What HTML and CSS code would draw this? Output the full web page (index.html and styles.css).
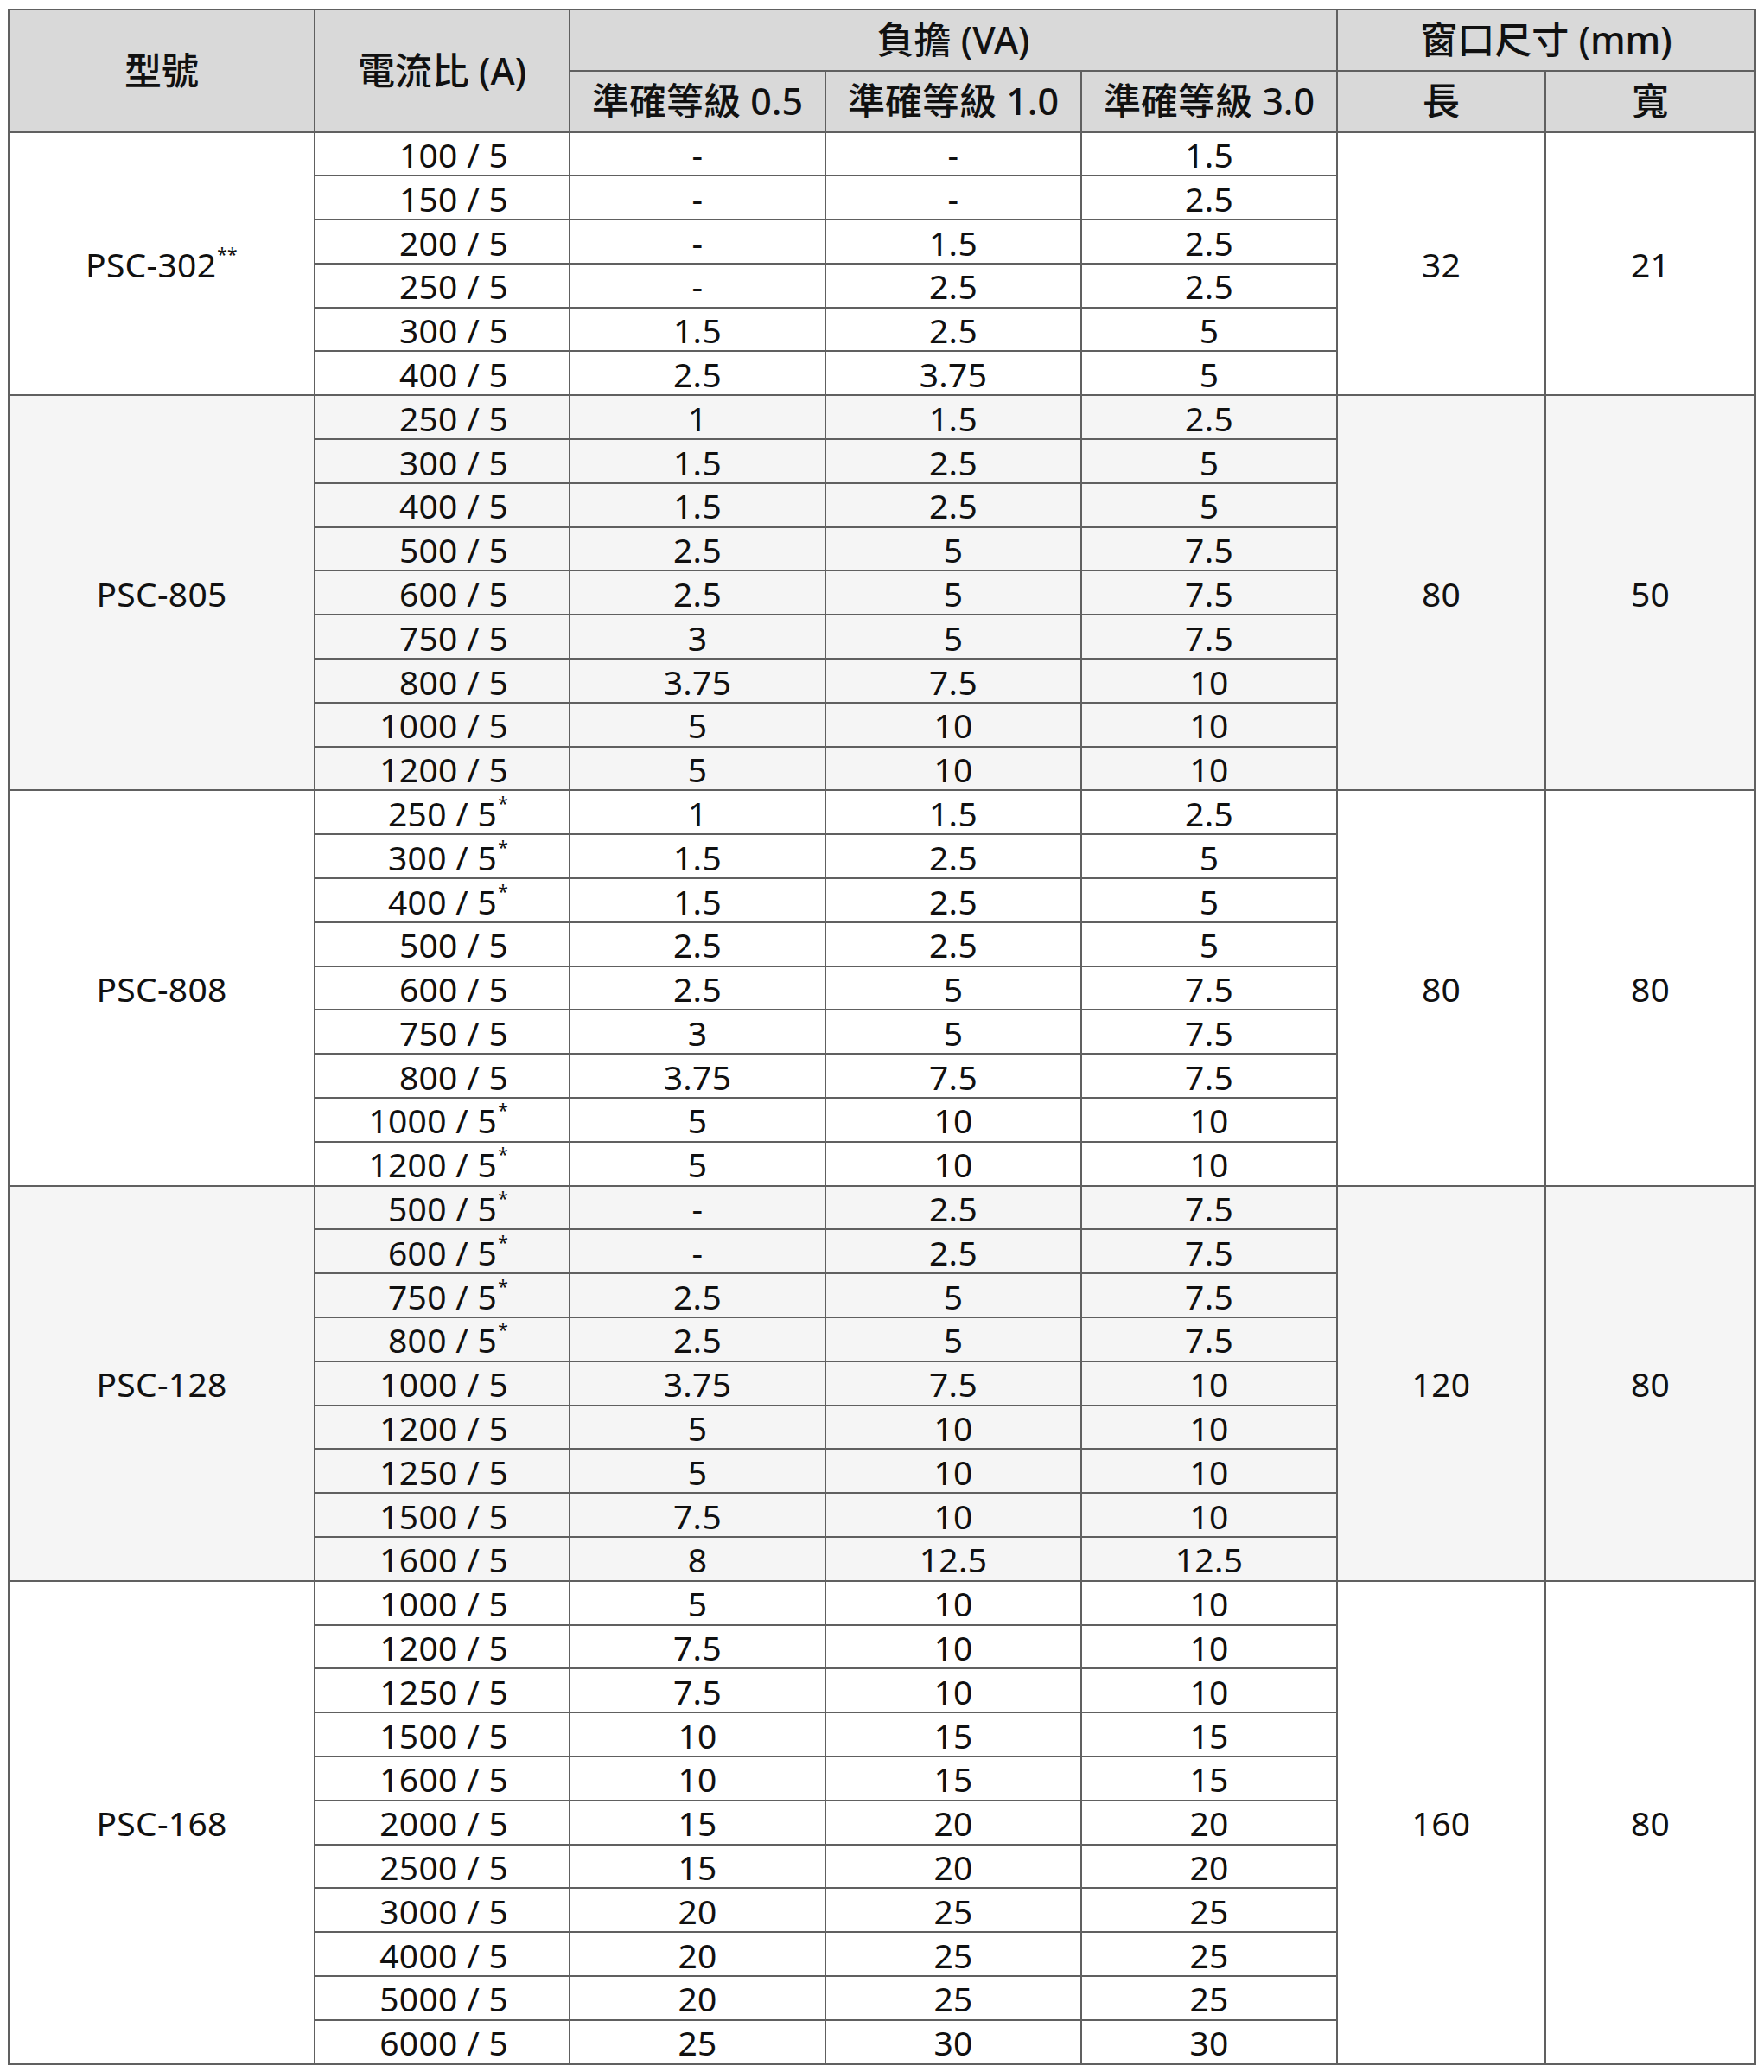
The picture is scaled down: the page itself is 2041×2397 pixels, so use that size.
FILE: index.html
```html
<!DOCTYPE html>
<html lang="zh-Hant">
<head>
<meta charset="utf-8">
<title>PSC 規格表</title>
<link rel="stylesheet" href="styles.css">
</head>
<body>
<table class="spec">
  <colgroup>
    <col class="c-model"><col class="c-ratio"><col class="c-va"><col class="c-va"><col class="c-va"><col class="c-len"><col class="c-wid">
  </colgroup>
  <thead>
    <tr class="h1">
      <th rowspan="2">型號</th>
      <th rowspan="2">電流比 (A)</th>
      <th colspan="3">負擔 (VA)</th>
      <th colspan="2">窗口尺寸 (mm)</th>
    </tr>
    <tr class="h2">
      <th>準確等級 0.5</th>
      <th>準確等級 1.0</th>
      <th>準確等級 3.0</th>
      <th>長</th>
      <th>寬</th>
    </tr>
  </thead>
  <tbody class="g-white">
    <tr><td rowspan="6">PSC-302<sup>**</sup></td><td>100 / 5</td><td>-</td><td>-</td><td>1.5</td><td rowspan="6">32</td><td rowspan="6">21</td></tr>
    <tr><td>150 / 5</td><td>-</td><td>-</td><td>2.5</td></tr>
    <tr><td>200 / 5</td><td>-</td><td>1.5</td><td>2.5</td></tr>
    <tr><td>250 / 5</td><td>-</td><td>2.5</td><td>2.5</td></tr>
    <tr><td>300 / 5</td><td>1.5</td><td>2.5</td><td>5</td></tr>
    <tr><td>400 / 5</td><td>2.5</td><td>3.75</td><td>5</td></tr>
  </tbody>
  <tbody class="g-gray">
    <tr><td rowspan="9">PSC-805</td><td>250 / 5</td><td>1</td><td>1.5</td><td>2.5</td><td rowspan="9">80</td><td rowspan="9">50</td></tr>
    <tr><td>300 / 5</td><td>1.5</td><td>2.5</td><td>5</td></tr>
    <tr><td>400 / 5</td><td>1.5</td><td>2.5</td><td>5</td></tr>
    <tr><td>500 / 5</td><td>2.5</td><td>5</td><td>7.5</td></tr>
    <tr><td>600 / 5</td><td>2.5</td><td>5</td><td>7.5</td></tr>
    <tr><td>750 / 5</td><td>3</td><td>5</td><td>7.5</td></tr>
    <tr><td>800 / 5</td><td>3.75</td><td>7.5</td><td>10</td></tr>
    <tr><td>1000 / 5</td><td>5</td><td>10</td><td>10</td></tr>
    <tr><td>1200 / 5</td><td>5</td><td>10</td><td>10</td></tr>
  </tbody>
  <tbody class="g-white">
    <tr><td rowspan="9">PSC-808</td><td>250 / 5<sup>*</sup></td><td>1</td><td>1.5</td><td>2.5</td><td rowspan="9">80</td><td rowspan="9">80</td></tr>
    <tr><td>300 / 5<sup>*</sup></td><td>1.5</td><td>2.5</td><td>5</td></tr>
    <tr><td>400 / 5<sup>*</sup></td><td>1.5</td><td>2.5</td><td>5</td></tr>
    <tr><td>500 / 5</td><td>2.5</td><td>2.5</td><td>5</td></tr>
    <tr><td>600 / 5</td><td>2.5</td><td>5</td><td>7.5</td></tr>
    <tr><td>750 / 5</td><td>3</td><td>5</td><td>7.5</td></tr>
    <tr><td>800 / 5</td><td>3.75</td><td>7.5</td><td>7.5</td></tr>
    <tr><td>1000 / 5<sup>*</sup></td><td>5</td><td>10</td><td>10</td></tr>
    <tr><td>1200 / 5<sup>*</sup></td><td>5</td><td>10</td><td>10</td></tr>
  </tbody>
  <tbody class="g-gray">
    <tr><td rowspan="9">PSC-128</td><td>500 / 5<sup>*</sup></td><td>-</td><td>2.5</td><td>7.5</td><td rowspan="9">120</td><td rowspan="9">80</td></tr>
    <tr><td>600 / 5<sup>*</sup></td><td>-</td><td>2.5</td><td>7.5</td></tr>
    <tr><td>750 / 5<sup>*</sup></td><td>2.5</td><td>5</td><td>7.5</td></tr>
    <tr><td>800 / 5<sup>*</sup></td><td>2.5</td><td>5</td><td>7.5</td></tr>
    <tr><td>1000 / 5</td><td>3.75</td><td>7.5</td><td>10</td></tr>
    <tr><td>1200 / 5</td><td>5</td><td>10</td><td>10</td></tr>
    <tr><td>1250 / 5</td><td>5</td><td>10</td><td>10</td></tr>
    <tr><td>1500 / 5</td><td>7.5</td><td>10</td><td>10</td></tr>
    <tr><td>1600 / 5</td><td>8</td><td>12.5</td><td>12.5</td></tr>
  </tbody>
  <tbody class="g-white">
    <tr><td rowspan="11">PSC-168</td><td>1000 / 5</td><td>5</td><td>10</td><td>10</td><td rowspan="11">160</td><td rowspan="11">80</td></tr>
    <tr><td>1200 / 5</td><td>7.5</td><td>10</td><td>10</td></tr>
    <tr><td>1250 / 5</td><td>7.5</td><td>10</td><td>10</td></tr>
    <tr><td>1500 / 5</td><td>10</td><td>15</td><td>15</td></tr>
    <tr><td>1600 / 5</td><td>10</td><td>15</td><td>15</td></tr>
    <tr><td>2000 / 5</td><td>15</td><td>20</td><td>20</td></tr>
    <tr><td>2500 / 5</td><td>15</td><td>20</td><td>20</td></tr>
    <tr><td>3000 / 5</td><td>20</td><td>25</td><td>25</td></tr>
    <tr><td>4000 / 5</td><td>20</td><td>25</td><td>25</td></tr>
    <tr><td>5000 / 5</td><td>20</td><td>25</td><td>25</td></tr>
    <tr><td>6000 / 5</td><td>25</td><td>30</td><td>30</td></tr>
  </tbody>
</table>
</body>
</html>
```

FILE: styles.css
```css
html, body {
  margin: 0;
  padding: 0;
  background: #ffffff;
}

body {
  padding: 10px 0 0 9px;
  font-family: "Noto Sans", "Noto Sans CJK TC", sans-serif;
  color: #111111;
}

.spec {
  border-collapse: collapse;
  table-layout: fixed;
  width: 2022px;
  border: 2px solid #555555;
}

.c-model { width: 354px; }
.c-ratio { width: 295px; }
.c-va { width: 296px; }
.c-len { width: 241px; }
.c-wid { width: 243px; }

.spec th,
.spec td {
  border: 2px solid #606060;
  padding: 0;
  text-align: center;
  vertical-align: middle;
}

.spec th {
  background: #d9d9d9;
  font-family: "Noto Sans", "Noto Sans CJK TC", sans-serif;
  font-size: 43px;
  font-weight: 500;
  line-height: 1.2;
  color: #111111;
}

.h1 { height: 70.5px; }
.h2 { height: 71px; }

.spec td {
  font-size: 39px;
  line-height: 1.1;
  padding-top: 3px;
  letter-spacing: 0.3px;
}

/* 電流比 column: right-aligned */
.spec tbody tr:first-child td:nth-child(2),
.spec tbody tr:not(:first-child) td:first-child {
  text-align: right;
  padding-right: 70px;
}

.spec tbody tr { height: 50.8px; }

.spec tbody { border-top: 2px solid #444444; }

.g-white td { background: #ffffff; }
.g-gray td { background: #f5f5f5; }

.spec sup {
  font-size: 21px;
  line-height: 0;
  vertical-align: 19px;
  margin-left: 1px;
}
```
